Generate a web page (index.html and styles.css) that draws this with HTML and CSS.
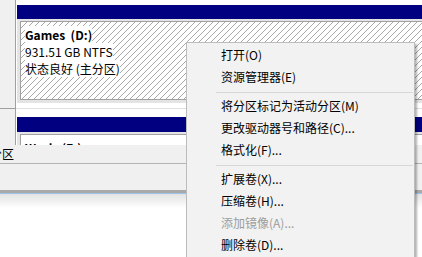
FILE: index.html
```html
<!DOCTYPE html>
<html lang="zh-CN">
<head>
    <meta charset="UTF-8">
    <title>磁盘管理</title>
    <link rel="stylesheet" href="styles.css">
</head>
<body>
    <div class="screen">
        <div class="disks">
            <div class="disk disk-first">
                <div class="disk-label"></div>
                <div class="disk-body">
                    <div class="part-bar"></div>
                    <div class="part-frame">
                        <div class="part-box part-selected">
                            <span class="part-line part-name">Games&nbsp; (D:)</span>
                            <span class="part-line">931.51 GB NTFS</span>
                            <span class="part-line">状态良好 (主分区)</span>
                        </div>
                    </div>
                </div>
            </div>
            <div class="disk disk-second">
                <div class="disk-label"></div>
                <div class="disk-body">
                    <div class="part-bar"></div>
                    <div class="part-frame">
                        <div class="part-box">
                            <span class="part-line part-name">Work&nbsp; (E:)</span>
                        </div>
                    </div>
                </div>
            </div>
        </div>

        <div class="legend"><span class="legend-text">主分区</span></div>
        <div class="pane"></div>
        <div class="pane-bottom"></div>

        <!-- context menu for the selected volume -->
        <ul class="menu">
            <li class="menu-item">打开(O)</li>
            <li class="menu-item">资源管理器(E)</li>
            <li class="menu-sep"></li>
            <li class="menu-item">将分区标记为活动分区(M)</li>
            <li class="menu-item">更改驱动器号和路径(C)...</li>
            <li class="menu-item">格式化(F)...</li>
            <li class="menu-sep"></li>
            <li class="menu-item">扩展卷(X)...</li>
            <li class="menu-item">压缩卷(H)...</li>
            <li class="menu-item disabled">添加镜像(A)...</li>
            <li class="menu-item">删除卷(D)...</li>
        </ul>
    </div>
</body>
</html>
```

FILE: styles.css
```css
body {
    margin: 0;
    font-family: "Noto Sans CJK SC", "Noto Sans", sans-serif;
    font-size: 12px;
    color: #000;
    background: #fff;
}
.screen {
    position: relative;
    width: 422px;
    height: 257px;
    overflow: hidden;
}
.disks {
    height: 145px;
    overflow: hidden;
}
.disk {
    display: flex;
}
.disk-first {
    height: 109px;
}
.disk-second {
    height: 60px;
}
.disk-label {
    width: 15px;
    flex: none;
    background-color: #f0f0f0;
    border-right: 1px solid #a0a0a0;
}
.disk-first .disk-label {
    border-bottom: 1px solid #a0a0a0;
}
.disk-body {
    flex: 1;
    padding: 5px 0 0 1px;
}
.disk-first .disk-body {
    border-bottom: 1px solid #e0e0e0;
}
.disk-second .disk-body {
    padding-top: 8px;
}
.part-bar {
    height: 14px;
    background-color: #000080;
}
.disk-second .part-bar {
    height: 15px;
}
.part-frame {
    padding: 2px 0 3px 3px;
    background-color: #e4e4e4;
}
.part-box {
    height: 77px;
    padding: 4px 0 0 4px;
    box-sizing: border-box;
    border: 1px solid #a0a0a0;
    border-right: none;
    background-color: #fff;
}
.part-selected {
    height: 79px;
    background-image: linear-gradient(to bottom right, transparent calc(50% - 0.7px), #a8a8a8 50%, transparent calc(50% + 0.7px));
    background-size: 6px 6px;
}
.part-line {
    display: block;
    width: fit-content;
    line-height: 17px;
    background-color: #fff;
}
.part-name {
    font-weight: bold;
}
.legend {
    height: 18px;
    line-height: 18px;
    background-color: #f0f0f0;
    border-bottom: 1px solid #b4b4b4;
    white-space: nowrap;
}
.legend-text {
    margin-left: -22px;
}
.pane {
    height: 26px;
    background-color: #f0f0f0;
    border-bottom: 3px solid #a9a9a9;
}
.pane-bottom {
    height: 70px;
    border-top: 1px solid #9cc3e8;
    background: linear-gradient(#e2e2e2, #fff 14px);
}
.menu {
    position: absolute;
    left: 186px;
    top: 42px;
    width: 229px;
    height: 230px;
    box-sizing: border-box;
    margin: 0;
    padding: 1px 0 0;
    list-style: none;
    background-color: #f2f2f2;
    border: 1px solid #bcbcbc;
    box-shadow: 2px 2px 2px rgba(0, 0, 0, 0.3);
}
.menu-item {
    height: 22px;
    line-height: 22px;
    padding-left: 34px;
    white-space: nowrap;
}
.menu-item.disabled {
    color: #9d9d9d;
}
.menu-sep {
    height: 1px;
    margin: 4px 1px 2px 29px;
    background-color: #d7d7d7;
}
```
